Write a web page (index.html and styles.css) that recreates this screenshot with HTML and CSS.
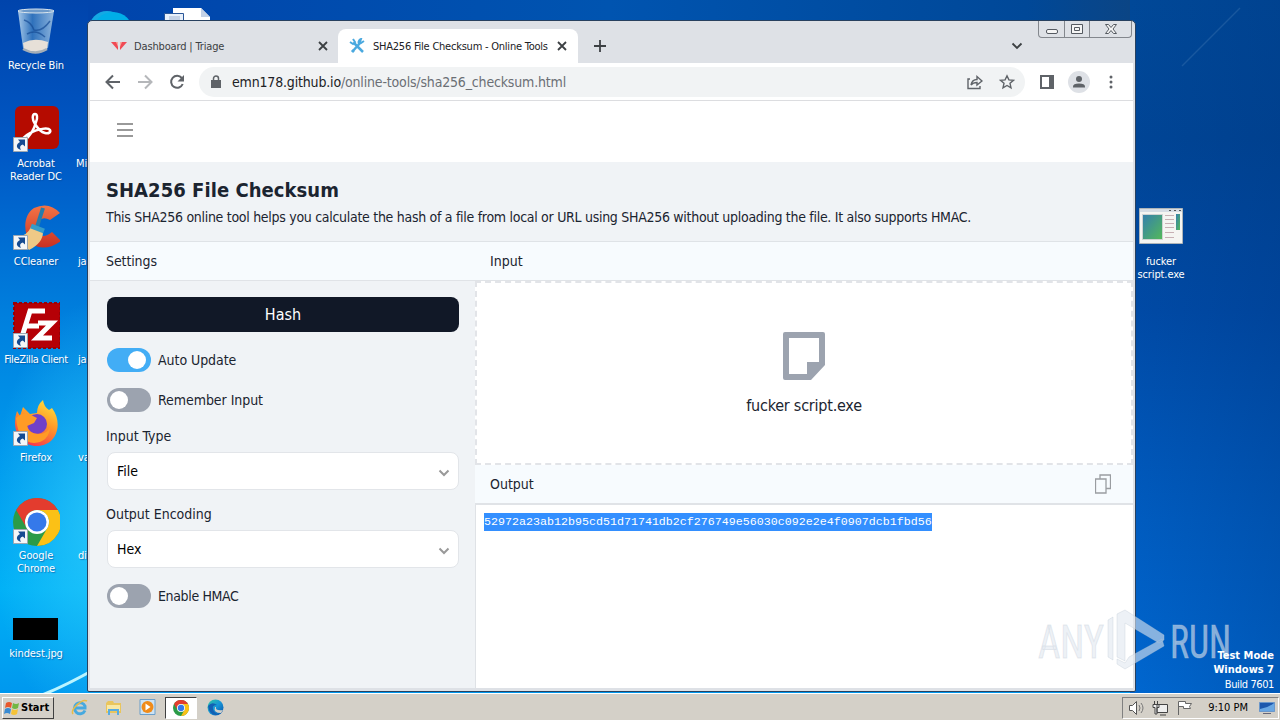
FILE: index.html
```html
<!DOCTYPE html>
<html lang="en">
  <head>
    <meta charset="utf-8">
    <title>SHA256 File Checksum - Online Tools</title>
    <link rel="stylesheet" href="styles.css">
  </head>
  <body>
    <svg width="0" height="0" class="defs">
      <defs>
        <linearGradient id="glass" x2="1"><stop stop-color="#b7d5ee"/><stop offset=".4" stop-color="#3476bd"/><stop offset="1" stop-color="#9cc0e2"/></linearGradient>
        <linearGradient id="cred" y2="1" x2="0"><stop stop-color="#f37445"/><stop offset="1" stop-color="#c93022"/></linearGradient>
        <linearGradient id="fire" x1=".8" x2=".3" y2="1"><stop stop-color="#ffe13c"/><stop offset=".45" stop-color="#ff9829"/><stop offset="1" stop-color="#f5314f"/></linearGradient>
        <linearGradient id="green" x2="1" y2="1"><stop stop-color="#347fae"/><stop offset="1" stop-color="#54b959"/></linearGradient>
        <linearGradient id="edge" x2="1" y2="1"><stop stop-color="#31c8a0"/><stop offset=".5" stop-color="#1695d8"/><stop offset="1" stop-color="#0b4da5"/></linearGradient>
      </defs>
      <symbol id="shortcut" viewBox="0 0 15 15">
        <path fill="#f4f6f8" stroke="#9da7b2" d="M.5.5h14v14H.5z"/>
        <path fill="#164b91" d="M5 2.500h7v7L9.800 7.500C7 8.500 6.500 10 8 13 3 11.500 2.500 7.500 7 5z"/>
      </symbol>
      <symbol id="chrome" viewBox="0 0 48 48">
        <circle cx="24" cy="24" r="24" fill="#2b9b48"/>
        <path fill="#e33c2e" d="M3.2 12a24 24 0 0 1 41.600 0H24a12 12 0 0 0-10.400 18z"/>
        <path fill="#fbc116" d="M44.800 12A24 24 0 0 1 24 48l10.400-18A12 12 0 0 0 24 12z"/>
        <circle cx="24" cy="24" r="12" fill="#fff"/>
        <circle cx="24" cy="24" r="9.500" fill="#3579ea"/>
      </symbol>
    </svg>

    <div class="desktop">
      <svg class="beams" width="1280" height="693">
        <path d="M42 695Q65 686 95 669" stroke="#b9f4ff" stroke-width="3"/>
        <path d="M1182 66L1240 8" stroke="#5f92c4" stroke-width="1.5" opacity=".25"/>
      </svg>

      <div class="icons">
        <div class="shortcut">
          <svg width="48" height="48" viewBox="0 0 48 48">
            <path fill="url(#glass)" d="M6 3l5 37q13 8 25 0l6-37z" opacity=".9"/>
            <path fill="#e7e0d8" d="M11 35q11-6 25-1l-1 7q-12 6-23 0z"/>
            <path fill="none" stroke="#174b94" stroke-width="1.500" opacity=".7" d="M12 12q7 2 10 10 8 2 16-9M15 26q9-5 18 3"/>
            <ellipse cx="24" cy="3" rx="18" ry="2" fill="#6d9aca" stroke="#dae5ed"/>
            <path fill="none" stroke="#a4aeb7" stroke-width="2.500" d="M11 41q13 7 24 0"/>
          </svg>
          <span>Recycle Bin</span>
        </div>
        <div class="shortcut">
          <svg width="48" height="48" viewBox="0 0 48 48">
            <rect x="3" width="44" height="43" rx="6" fill="#b50b00"/>
            <path fill="none" stroke="#fff" stroke-width="2.500" stroke-linejoin="round" d="M12 35C17 31 22 24 24 16 26 11 25 8 23 8c-3 0-3 6 0 10 3 5 6 8 10 9 4 1 6-1 5-3-2-3-12-1-20 3-6 3-9 7-6 8z"/>
            <use href="#shortcut" x="1" y="31" width="15" height="15"/>
          </svg>
          <span>Acrobat<br>Reader DC</span>
        </div>
        <div class="shortcut">
          <svg width="48" height="48" viewBox="0 0 48 48">
            <path fill="url(#cred)" d="M48 9Q37-3 22 4C12 10 10 28 19 39q13 10 30-2l-9-9q-7 6-13 3-6-6-1-14 5-5 12-1z"/>
            <path stroke="#247dad" stroke-width="4" d="M31 4l-7 22"/>
            <path fill="#efc986" d="M19 23l12 5q0 11-14 18L5 33q10-1 14-10z"/>
            <path stroke="#369cc8" stroke-width="5" d="M19 22l13 5"/>
            <use href="#shortcut" x="1" y="31" width="15" height="15"/>
          </svg>
          <span>CCleaner</span>
        </div>
        <div class="shortcut">
          <svg width="48" height="48" viewBox="0 0 48 48">
            <rect x="2" y="1" width="46" height="45" fill="#b50006" stroke="#980006" stroke-width="2" stroke-dasharray="3 2"/>
            <path fill="none" stroke="#fff" stroke-width="5" d="M33 9H18L9 38m4-14h14M26 21h14L25 36h15"/>
            <use href="#shortcut" x="1" y="31" width="15" height="15"/>
          </svg>
          <span class="tight">FileZilla Client</span>
        </div>
        <div class="shortcut">
          <svg width="48" height="48" viewBox="0 0 48 48">
            <path fill="url(#fire)" d="M5 11l3 5 3-9 7 7 7-1Q25 5 31 0q1 7 6 10l3-2c10 13 6 31-6 36C18 51 3 39 3 23q0-7 2-12z"/>
            <circle cx="25" cy="24" r="10" fill="#7140c9"/>
            <path fill="#ff9b25" d="M4 18q8-7 15-3l6 3-3 5-7 3q2 8 12 8 8 0 11-7-1 15-16 16Q6 42 4 18z"/>
            <use href="#shortcut" x="1" y="31" width="15" height="15"/>
          </svg>
          <span>Firefox</span>
        </div>
        <div class="shortcut">
          <svg width="48" height="48" viewBox="0 0 48 48">
            <use href="#chrome" x="1" y="0" width="48" height="48"/>
            <use href="#shortcut" x="1" y="31" width="15" height="15"/>
          </svg>
          <span>Google<br>Chrome</span>
        </div>
        <div class="shortcut">
          <svg width="48" height="48" viewBox="0 0 48 48"><rect x="1" y="22" width="45" height="22"/></svg>
          <span>kindest.jpg</span>
        </div>
      </div>

      <div class="icons second">
        <div class="shortcut">
          <svg width="48" height="48" viewBox="0 0 48 48"><circle cx="19" cy="21" r="18" fill="#14a9e4"/><circle cx="25" cy="24" r="20" fill="#00aee8"/></svg>
        </div>
        <div class="shortcut"><i></i><span>Mi</span></div>
        <div class="shortcut"><i></i><span>&thinsp;ja</span></div>
        <div class="shortcut"><i></i><span>&thinsp;ja</span></div>
        <div class="shortcut"><i></i><span>&thinsp;va</span></div>
        <div class="shortcut"><i></i><span>&thinsp;di</span></div>
      </div>

      <svg class="doc" width="48" height="16">
        <path fill="#fff" d="M9 0h28l9 9v7H9z"/>
        <path fill="#e8f0fa" stroke="#2a5798" d="M.5 5.500h19V16H.5z"/>
        <path fill="#c4d2e6" d="M37 0v9h9zM5 8h11v4H5z"/>
      </svg>

      <div class="shortcut exe">
        <svg width="48" height="48" viewBox="0 0 48 48">
          <path fill="#f5f5f2" stroke="#aeb4b8" d="M2.500 4.500h43v35h-43z"/>
          <path fill="#d6dde4" d="M3 5h42v3H3z"/>
          <path fill="url(#green)" stroke="#cfd3d2" d="M5.500 10.500h20v25h-20z"/>
          <path stroke="#c7b0b4" d="M28 11.500h9M28 15.500h9M28 19.500h9M28 23.500h9M28 28.500h9M28 33.500h9"/>
          <path fill="url(#green)" d="M39 10h4v16h-4z"/>
          <path stroke="#555" stroke-dasharray="2 3" d="M32 6.500h13"/>
        </svg>
        <span>fucker<br>script.exe</span>
      </div>

      <div class="window">
        <div class="titlebar">
          <div class="tab">
            <svg width="16" height="16" viewBox="0 0 16 16"><path fill="#f04a55" d="M0 4h7v8zM9 4h7l-7 8z"/><path fill="#f7a8a0" d="M5 4h2v5zM9 4h2L9 9z"/></svg>
            <span class="tab-name">Dashboard | Triage</span>
            <svg class="close" width="10" height="10" viewBox="0 0 10 10"><path d="M1 1l8 8M9 1L1 9"/></svg>
          </div>
          <div class="tab active">
            <svg width="16" height="16" viewBox="0 0 16 16" fill="none" stroke="#4ba9df"><path stroke-width="2.500" d="M5 5l9 9M12 4L3 14"/><path stroke-width="2" d="M1 4l3 2 2-2-2-3M15 3l-3 2-1-1 1-3a3.500 3.500 0 0 0-2 5M3 12l2 2"/></svg>
            <span class="tab-name">SHA256 File Checksum - Online Tools</span>
            <svg class="close" width="10" height="10" viewBox="0 0 10 10"><path d="M1 1l8 8M9 1L1 9"/></svg>
          </div>
          <svg class="plus" width="12" height="12"><path d="M6 0v12M0 6h12"/></svg>
          <svg class="tabs-menu" width="12" height="8"><path d="M1.500 1.500L6 6l4.500-4.500"/></svg>
          <div class="buttons">
            <span><svg width="12" height="6"><rect x=".5" y=".5" width="11" height="4" rx="1.500"/></svg></span>
            <span><svg width="12" height="10"><path d="M.5.5h11v9H.5zM3.500 3.500h5v3h-5z"/></svg></span>
            <span><svg width="12" height="10"><path d="M.5.500h3L6 3.500 8.500.500h3L8 5l3.500 4.500h-3L6 6.500 3.500 9.500h-3L4 5z"/></svg></span>
          </div>
        </div>

        <div class="toolbar">
          <svg width="16" height="16" viewBox="0 0 16 16"><path d="M15 8H2M8 1.500L1.500 8 8 14.500"/></svg>
          <svg class="off" width="16" height="16" viewBox="0 0 16 16"><path d="M1 8h13M8 1.500L14.500 8 8 14.500"/></svg>
          <svg width="16" height="16" viewBox="0 0 16 16"><path d="M12.800 4A6 6 0 1 0 13.700 10"/><path class="solid" d="M15 1v6.500H8.500z"/></svg>
          <div class="address">
            <svg width="10" height="14" viewBox="0 0 10 14"><path class="solid" d="M0 5h10v8H0z"/><path d="M2.500 6V3.500a2.500 2.500 0 0 1 5 0V6" stroke-width="1.500"/></svg>
            <span class="url"><b>emn178.github.io</b>/online-tools/sha256_checksum.html</span>
            <svg width="16" height="16" viewBox="0 0 16 16"><path d="M3 5H1v9.500h12V12M4 11q1-5.500 6-5.500V2.500L15 7l-5 4V8.500q-4 0-6 2.500z"/></svg>
            <svg width="16" height="16" viewBox="0 0 16 16"><path d="M8 1.800l1.900 4.100 4.600.4-3.500 3 1 4.500L8 11.500l-4 2.300 1-4.500-3.500-3 4.600-.4z"/></svg>
          </div>
          <svg class="panel" width="14" height="14"><path d="M1 1h12v12H1z"/><path class="solid" d="M9 0h5v14H9z"/></svg>
          <svg class="user" width="22" height="22"><circle cx="11" cy="11" r="11" fill="#dee1e6" stroke="none"/><circle class="solid" cx="11" cy="8" r="3"/><path class="solid" d="M5 16.500v-1q0-3 6-3t6 3v1z"/></svg>
          <svg class="dots" width="4" height="14"><circle class="solid" cx="2" cy="2" r="1.500"/><circle class="solid" cx="2" cy="7" r="1.500"/><circle class="solid" cx="2" cy="12" r="1.500"/></svg>
        </div>

        <div class="page">
          <div class="menu"><svg width="16" height="14"><path d="M0 1h16M0 7h16M0 13h16"/></svg></div>
          <div class="intro">
            <h1>SHA256 File Checksum</h1>
            <p>This SHA256 online tool helps you calculate the hash of a file from local or URL using SHA256 without uploading the file. It also supports HMAC.</p>
          </div>
          <div class="columns">
            <div class="settings">
              <div class="heading"><span>Settings</span></div>
              <div class="form">
                <div class="hash"><span>Hash</span></div>
                <div class="toggle on"><i></i><span>Auto Update</span></div>
                <div class="toggle"><i></i><span>Remember Input</span></div>
                <div class="label">Input Type</div>
                <div class="select"><span>File</span><svg width="12" height="8"><path d="M1.500 1.500L6 6l4.500-4.500"/></svg></div>
                <div class="label">Output Encoding</div>
                <div class="select"><span>Hex</span><svg width="12" height="8"><path d="M1.500 1.500L6 6l4.500-4.500"/></svg></div>
                <div class="toggle"><i></i><span class="hmac">Enable HMAC</span></div>
              </div>
            </div>
            <div class="results">
              <div class="heading"><span>Input</span></div>
              <div class="drop">
                <svg width="42" height="48"><path fill="#9ca3af" fill-rule="evenodd" d="M2 0h38q2 0 2 2v31L28 48H2q-2 0-2-2V2q0-2 2-2zM6 6v36h18V30h12V6z"/></svg>
                <span>fucker script.exe</span>
              </div>
              <div class="heading out"><span>Output</span>
                <svg width="16" height="20" viewBox="0 0 16 20"><path d="M5 5V1h10.500v13.500H11M.5 5H11v14H.5z"/></svg>
              </div>
              <div class="output"><span>52972a23ab12b95cd51d71741db2cf276749e56030c092e2e4f0907dcb1fbd56</span></div>
            </div>
          </div>
        </div>
      </div>

      <svg class="watermark" width="200" height="64">
        <g font-family="Roboto" font-size="47">
          <text x="3" y="50" textLength="66" lengthAdjust="spacingAndGlyphs">ANY</text>
          <text x="135" y="50" textLength="61" lengthAdjust="spacingAndGlyphs">RUN</text>
        </g>
        <path d="M73 12l5-3v43l-5-3zM82 6l8-4 39 25v5l-5 3-34-20v38l-8-4zM94 49l33-18 2 7-39 23-8-5v-5l8 4z"/>
      </svg>

      <div class="build"><b>Test Mode</b><b>Windows 7</b><span>Build 7601</span></div>
    </div>

    <div class="taskbar">
      <div class="start">
        <svg width="16" height="16" viewBox="0 0 16 16"><path fill="#e8582c" d="M2 3q3-2 6 0L7 8Q4 6 1 8z"/><path fill="#72b743" d="M9 3q3 2 6 0l-1 5q-3 2-6 0z"/><path fill="#398bd2" d="M1 9q3-2 6 0l-1 5q-3-2-6 0z"/><path fill="#f5c337" d="M8 9q3 2 6 0l-1 5q-3 2-6 0z"/></svg>
        <b>Start</b>
      </div>
      <div class="task"><svg width="17" height="17" viewBox="0 0 17 17" fill="none"><path stroke="#47a9df" stroke-width="3" d="M14 11.500A5.500 5.500 0 1 1 14 7v2H4"/><path stroke="#e8bc47" stroke-width="1.500" d="M2 15C-1 11 11-1 16 2"/></svg></div>
      <div class="task"><svg width="17" height="17" viewBox="0 0 17 17"><path fill="#e9c55d" d="M1 4l2-2h5l1 2h7v10H1z"/><path fill="#f8e8a5" d="M2 6h13v6H2z"/><path fill="none" stroke="#59ace0" stroke-width="2" d="M4 16v-5h9v5"/></svg></div>
      <div class="task"><svg width="17" height="17" viewBox="0 0 17 17"><path fill="#cde3f4" stroke="#6b9fca" d="M1 .5h15v15H1z"/><circle cx="8.500" cy="8" r="6" fill="#f08b19"/><path fill="#fff" d="M6.500 4.500v7l5-3.500z"/></svg></div>
      <div class="task current"><svg width="16" height="16"><use href="#chrome" width="16" height="16"/></svg></div>
      <div class="task"><svg width="17" height="17" viewBox="0 0 17 17"><circle cx="8.500" cy="8.500" r="8" fill="url(#edge)"/><path fill="#d4d0c8" d="M9 8q-1 4 7 3l-2 3q-8 0-6-6z"/><path fill="#1260b4" d="M1 7q4-5 9-1-5 0-4 4t6 6Q2 17 1 7z"/></svg></div>
      <div class="tray">
        <svg width="16" height="16" viewBox="0 0 16 16"><path fill="#fff" stroke="#555" d="M.5 5.500h3l4-4v13l-4-4h-3z"/><path fill="none" stroke="#777" d="M10 5q2 3 0 6M12 3q4 5 0 10"/></svg>
        <svg width="17" height="16" viewBox="0 0 17 16"><path fill="#eee" stroke="#444" d="M5 4.500h10.500v8H5zM8 15h6M2.500 1v3m3-3v3M1 4.500h6v3H5V14H3V7.500H1z"/></svg>
        <svg width="17" height="16" viewBox="0 0 17 16"><path fill="#fff" stroke="#666" d="M2.500 15V1.500h7v2h6l-2 3 1 2h-7v-2h-5"/></svg>
        <span>9:10 PM</span>
        <svg width="16" height="14"><path fill="#1d58ad" stroke="#6b97ca" d="M.5 1.500h15v9H.5z"/><path fill="#69a7e3" d="M1 8q8-1 14-6v8H1z"/><path stroke="#667" d="M4 12.500h8"/></svg>
      </div>
    </div>
  </body>
</html>
```
FILE: styles.css
```css
body {
  margin: 0;
  width: 1280px;
  height: 720px;
  overflow: hidden;
  display: flex;
  flex-direction: column;
  font-family: "DejaVu Sans Condensed", "DejaVu Sans", sans-serif;
  font-stretch: condensed;
  font-size: 11px;
}

* {
  box-sizing: border-box;
}

svg {
  flex: none;
}

.defs {
  position: absolute;
}

.desktop {
  position: relative;
  height: 693px;
  overflow: hidden;
  background:
    linear-gradient(90deg, #0044ac, #0054b0 50%, #004898 90%, #0b4585) 88px 0 / 1042px 21px no-repeat,
    linear-gradient(90deg, transparent 0, rgba(0, 50, 120, .25) 100%) 1130px 0 / 150px 100% no-repeat,
    linear-gradient(180deg, #004898 0%, #004596 20%, #004aa6 45%, #005cc0 75%, #0067d0 100%) 1130px 0 / 150px 100% no-repeat,
    radial-gradient(ellipse 110px 220px at 100px 520px, rgba(60, 215, 255, .6), rgba(60, 215, 255, 0)),
    linear-gradient(180deg, #0044ac 0%, #0058c5 22%, #0080de 46%, #0098ec 65%, #00b0f6 85%, #0098ee 100%);
}

.beams {
  position: absolute;
  left: 0;
  top: 0;
  fill: none;
}

.icons {
  position: absolute;
  left: 0;
  top: 0;
  width: 72px;
  display: grid;
  grid-auto-rows: 98px;
}

.shortcut {
  display: flex;
  flex-direction: column;
  align-items: center;
  gap: 3px;
  padding-top: 8px;
  color: #fff;
  line-height: 13px;
  letter-spacing: -0.1px;
  text-align: center;
  white-space: nowrap;
  text-shadow: 1px 1px 1px rgba(10, 74, 144, .6);
}

.shortcut i {
  height: 48px;
}

.tight {
  letter-spacing: -0.36px;
}

.second {
  left: 76px;
}

.second .shortcut {
  align-items: flex-start;
}

.second svg {
  margin-left: 12px;
}

.doc {
  position: absolute;
  left: 164px;
  top: 8px;
}

.exe {
  position: absolute;
  left: 1125px;
  top: 196px;
  width: 72px;
}

.build {
  position: absolute;
  right: 6px;
  bottom: 0;
  display: flex;
  flex-direction: column;
  align-items: flex-end;
  line-height: 14px;
  color: #fff;
}

.build span {
  line-height: 16px;
  letter-spacing: -0.4px;
}

.window {
  position: absolute;
  left: 87px;
  top: 20px;
  width: 1049px;
  height: 672px;
  display: flex;
  flex-direction: column;
  padding: 0 2px 3px;
  border: 1px solid #28415f;
  border-radius: 5px 5px 2px 2px;
  background: #dee1e6;
}

.titlebar {
  height: 42px;
  display: flex;
  align-items: center;
  padding: 8px 0 0 8px;
  position: relative;
  color: #3c4043;
}

.tab {
  width: 240px;
  height: 34px;
  display: flex;
  align-items: center;
  padding: 0 10px 0 13px;
}

.tab.active {
  background: #fff;
  border-radius: 8px 8px 0 0;
  padding-left: 11px;
  padding-right: 11px;
  color: #202124;
}

.tab-name {
  flex: 1;
  margin-left: 7px;
  white-space: nowrap;
  letter-spacing: -0.15px;
}

.active .tab-name {
  margin-left: 8px;
  letter-spacing: -0.23px;
}

.close,
.plus,
.tabs-menu {
  fill: none;
  stroke: #3c4043;
  stroke-width: 1.8;
}

.plus {
  margin-left: 16px;
}

.tabs-menu {
  margin-left: auto;
  margin-right: 110px;
}

.buttons {
  position: absolute;
  right: 1px;
  top: 0;
  height: 17px;
  display: flex;
  border: 1px solid #83878d;
  border-top: 0;
  border-radius: 0 0 4px 4px;
}

.buttons span {
  width: 25px;
  display: flex;
  align-items: center;
  justify-content: center;
}

.buttons span + span {
  border-left: 1px solid #83878d;
}

.buttons span:last-child {
  width: 42px;
}

.buttons svg {
  fill: #f5f5f5;
  stroke: #555a61;
}

.buttons span:first-child svg {
  margin-top: 5px;
}

.toolbar {
  height: 38px;
  display: flex;
  align-items: center;
  gap: 16px;
  padding: 0 18px 0 15px;
  background: #fff;
  border-bottom: 1px solid #dcdde0;
}

.toolbar svg {
  fill: none;
  stroke: #5f6368;
  stroke-width: 2;
}

.toolbar .off {
  stroke: #b5b7ba;
}

.toolbar .solid {
  fill: #5f6368;
  stroke: none;
}

.toolbar .address {
  flex: 1;
  height: 30px;
  display: flex;
  align-items: center;
  gap: 16px;
  padding: 0 10px 0 12px;
  margin-left: -2px;
  margin-right: -1px;
  border-radius: 15px;
  background: #f1f3f4;
  color: #6b6f74;
}

.toolbar .address svg {
  stroke-width: 1.4;
}

.url {
  flex: 1;
  margin-left: -5px;
  font-size: 14px;
  letter-spacing: -0.17px;
}

.url b {
  color: #202124;
  font-weight: normal;
}

.toolbar .user {
  margin-left: -2px;
}

.toolbar .dots {
  margin-left: 3px;
  margin-right: 2px;
}

.page {
  flex: 1;
  display: flex;
  flex-direction: column;
  background: #f0f3f6;
  color: #1b2430;
  font-size: 14px;
  white-space: nowrap;
}

.menu {
  height: 61px;
  display: flex;
  align-items: center;
  padding: 0 0 4px 27px;
  background: #fff;
}

.menu svg {
  stroke: #999;
  stroke-width: 2;
}

.intro {
  height: 80px;
  padding: 14px 16px 0;
  border-bottom: 1px solid #dfe3e7;
}

h1 {
  margin: 0;
  font-size: 20px;
  line-height: 28px;
  letter-spacing: 0.05px;
}

p {
  margin: 0;
  line-height: 26px;
  letter-spacing: -0.29px;
}

.columns {
  flex: 1;
  display: flex;
}

.settings {
  width: 385px;
}

.heading {
  height: 39px;
  display: flex;
  align-items: center;
  justify-content: space-between;
  padding: 0 22px 0 15px;
  border-bottom: 1px solid #e0e3e7;
  background: #f7fbfe;
}

.settings .heading {
  padding-left: 16px;
  letter-spacing: -0.1px;
}

.heading svg {
  fill: none;
  stroke: #9a9da1;
  stroke-width: 1.3;
}

.form {
  padding: 16px 16px 0 17px;
}

.hash {
  height: 35px;
  display: flex;
  align-items: center;
  justify-content: center;
  border-radius: 8px;
  background: #111827;
  color: #fff;
  font-size: 16px;
}

.toggle {
  height: 24px;
  display: flex;
  align-items: center;
  gap: 7px;
  margin-top: 16px;
  letter-spacing: -0.05px;
}

.toggle i {
  width: 44px;
  height: 24px;
  padding: 3px;
  border-radius: 12px;
  background: #9ca3af;
}

.toggle i::before {
  content: "";
  display: block;
  width: 18px;
  height: 18px;
  border-radius: 50%;
  background: #fff;
}

.toggle.on i {
  background: #42adf5;
}

.toggle.on i::before {
  margin-left: 18px;
}

.hmac {
  letter-spacing: -0.35px;
}

.label {
  line-height: 20px;
  margin: 14px 0 6px -1px;
}

.select {
  height: 38px;
  display: flex;
  align-items: center;
  justify-content: space-between;
  padding: 0 8px 0 9px;
  border: 1px solid #e2e5e9;
  border-radius: 8px;
  background: #fff;
  color: #000;
}

.select svg {
  margin-top: 3px;
  fill: none;
  stroke: #999;
  stroke-width: 2;
}

.results {
  flex: 1;
  display: flex;
  flex-direction: column;
}

.drop {
  height: 184px;
  display: flex;
  flex-direction: column;
  align-items: center;
  gap: 15px;
  padding-top: 49px;
  border: 2px dashed #e2e4e8;
  background: #fff;
  font-size: 16px;
  line-height: 22px;
  letter-spacing: -0.22px;
}

.out {
  border-bottom-width: 2px;
  height: 40px;
}

.output {
  flex: 1;
  padding: 8px;
  border-left: 1px solid #dfe2e6;
  background: #fff;
  color: #fff;
  font-family: "Liberation Mono", monospace;
  font-size: 11.67px;
  line-height: 18px;
}

.output span {
  display: inline-block;
  background: #338fff;
}

.watermark {
  position: absolute;
  left: 1035px;
  top: 608px;
  overflow: visible;
  fill: rgba(225, 232, 240, .6);
  stroke: rgba(190, 200, 212, .35);
  stroke-width: 1;
}

.taskbar {
  height: 27px;
  display: flex;
  align-items: center;
  padding: 2px 1px 1px 2px;
  border-top: 1px solid #fff;
  background: #d4d0c8;
}

.start {
  width: 52px;
  height: 22px;
  display: flex;
  align-items: center;
  gap: 1px;
  margin-right: 9px;
  padding-left: 1px;
  border: 1px solid;
  border-color: #fff #404040 #404040 #fff;
}

.task {
  width: 32px;
  height: 22px;
  display: flex;
  align-items: center;
  justify-content: center;
  margin-right: 2px;
}

.task.current {
  border: 1px solid;
  border-color: #404040 #fff #fff #404040;
  background: #fff;
}

.tray {
  height: 22px;
  display: flex;
  align-items: center;
  gap: 7px;
  margin-left: auto;
  padding: 0 3px 0 6px;
  border: 1px solid;
  border-color: #808080 #fff #fff #808080;
}

.tray span {
  margin: 0 4px 0 8px;
}
```
